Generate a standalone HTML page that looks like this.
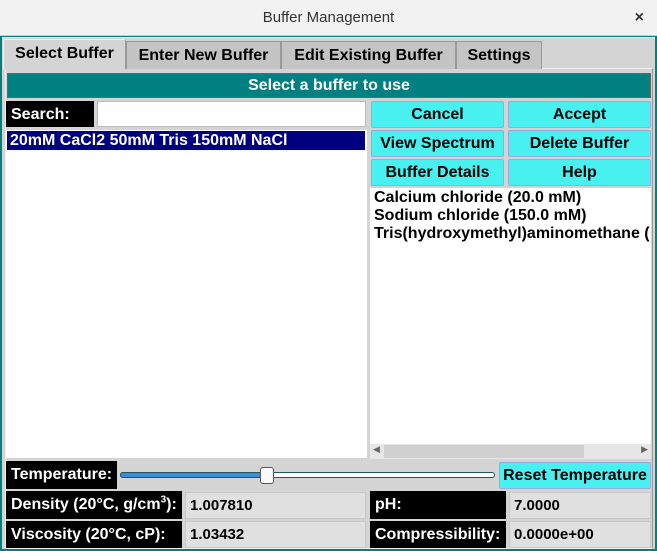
<!DOCTYPE html>
<html><head><style>
*{box-sizing:border-box;margin:0;padding:0}
body{width:657px;height:551px;overflow:hidden;background:#008080;font-family:"Liberation Sans",Arial,sans-serif;position:relative}
.a{position:absolute}
.t{font-weight:bold;font-size:16px;white-space:nowrap}
.title{left:0;top:0;width:657px;height:36px;background:#f2f2f2;border-bottom:1px solid #ccc;text-align:center;line-height:36px;font-size:15px;color:#333}
.win{left:2px;top:37px;width:653px;height:512px;background:#d4d4d4;border-top:1px solid #eee}
.tab{top:41px;height:28px;background:#c4c4c4;border:1px solid #999;border-bottom:none;line-height:28px;text-align:center;overflow:visible}
.lbl{background:#000;color:#fff;padding-left:5px;line-height:27px}
.btn{background:#48f0f0;border:1px solid #9ad;border-radius:2px;text-align:center;line-height:25px;color:#000}
.val{background:#e0e0e0;border:1px solid #c8c8c8;padding-left:4px;line-height:25px;font-size:15px}
sup{font-size:10px;line-height:0}
</style></head><body>
<div class="a title">Buffer Management<span style="position:absolute;right:13px;top:0;font-size:16px;font-weight:bold;color:#333">×</span></div>
<div class="a win"></div>
<div class="a" style="left:5px;top:68px;width:648px;height:481px;background:#d4d4d4;border:1px solid #eee;border-right-color:#999"></div>
<div class="a tab t" style="left:3px;width:123px;background:#d4d4d4;top:39px;height:30px;border-color:#eee #999 #999 #eee">Select Buffer</div>
<div class="a tab t" style="left:126px;width:155px">Enter New Buffer</div>
<div class="a tab t" style="left:281px;width:175px">Edit Existing Buffer</div>
<div class="a tab t" style="left:456px;width:86px">Settings</div>
<div class="a t" style="left:7px;top:73px;width:644px;height:25px;background:#008080;color:#fff;text-align:center;line-height:24px;border:1px solid #666">Select a buffer to use</div>
<div class="a t lbl" style="left:6px;top:101px;width:88px;height:26px">Search:</div>
<div class="a" style="left:97px;top:101px;width:269px;height:26px;background:#fff;border:1px solid #bbb"></div>
<div class="a" style="left:6px;top:130px;width:361px;height:328px;background:#fff"></div>
<div class="a t" style="left:7px;top:131px;width:358px;height:19px;background:#000080;color:#fff;line-height:19px;padding-left:3px">20mM CaCl2 50mM Tris 150mM NaCl</div>
<div class="a t btn" style="left:371px;top:101px;width:133px;height:27px">Cancel</div>
<div class="a t btn" style="left:508px;top:101px;width:143px;height:27px">Accept</div>
<div class="a t btn" style="left:371px;top:130px;width:133px;height:27px">View Spectrum</div>
<div class="a t btn" style="left:508px;top:130px;width:143px;height:27px">Delete Buffer</div>
<div class="a t btn" style="left:371px;top:159px;width:133px;height:27px">Buffer Details</div>
<div class="a t btn" style="left:508px;top:159px;width:143px;height:27px">Help</div>
<div class="a" style="left:370px;top:188px;width:281px;height:271px;background:#fff;overflow:hidden">
<div class="t" style="padding:1px 0 0 4px;line-height:18px">Calcium chloride (20.0 mM)<br>Sodium chloride (150.0 mM)<br>Tris(hydroxymethyl)aminomethane (</div>
<div class="a" style="left:0;top:256px;width:281px;height:15px;background:#e6e6e6"><div class="a" style="left:14px;top:1px;width:200px;height:13px;background:#d0d0d0"></div><span class="a" style="left:3px;top:0;font-size:9px;color:#666">◀</span><span class="a" style="right:3px;top:0;font-size:9px;color:#666">▶</span></div>
</div>
<div class="a t lbl" style="left:6px;top:461px;width:111px;height:28px;line-height:28px">Temperature:</div>
<div class="a" style="left:120px;top:472px;width:375px;height:6px;border:1px solid #255;border-radius:3px;background:#fff"></div>
<div class="a" style="left:120px;top:472px;width:148px;height:6px;border:1px solid #255;border-radius:3px;background:#3a8fd8"></div>
<div class="a" style="left:260px;top:467px;width:14px;height:17px;background:#fafafa;border:1px solid #555;border-radius:3px"></div>
<div class="a t btn" style="left:499px;top:462px;width:152px;height:27px">Reset Temperature</div>
<div class="a t lbl" style="left:6px;top:491px;width:176px;height:28px;line-height:28px">Density (20°C, g/cm<sup>3</sup>):</div>
<div class="a t val" style="left:185px;top:492px;width:181px;height:27px">1.007810</div>
<div class="a t lbl" style="left:370px;top:491px;width:136px;height:28px;line-height:28px">pH:</div>
<div class="a t val" style="left:509px;top:492px;width:142px;height:27px">7.0000</div>
<div class="a t lbl" style="left:6px;top:521px;width:176px;height:27px">Viscosity (20°C, cP):</div>
<div class="a t val" style="left:185px;top:521px;width:181px;height:27px">1.03432</div>
<div class="a t lbl" style="left:370px;top:521px;width:136px;height:27px">Compressibility:</div>
<div class="a t val" style="left:509px;top:521px;width:142px;height:27px">0.0000e+00</div>
</body></html>
